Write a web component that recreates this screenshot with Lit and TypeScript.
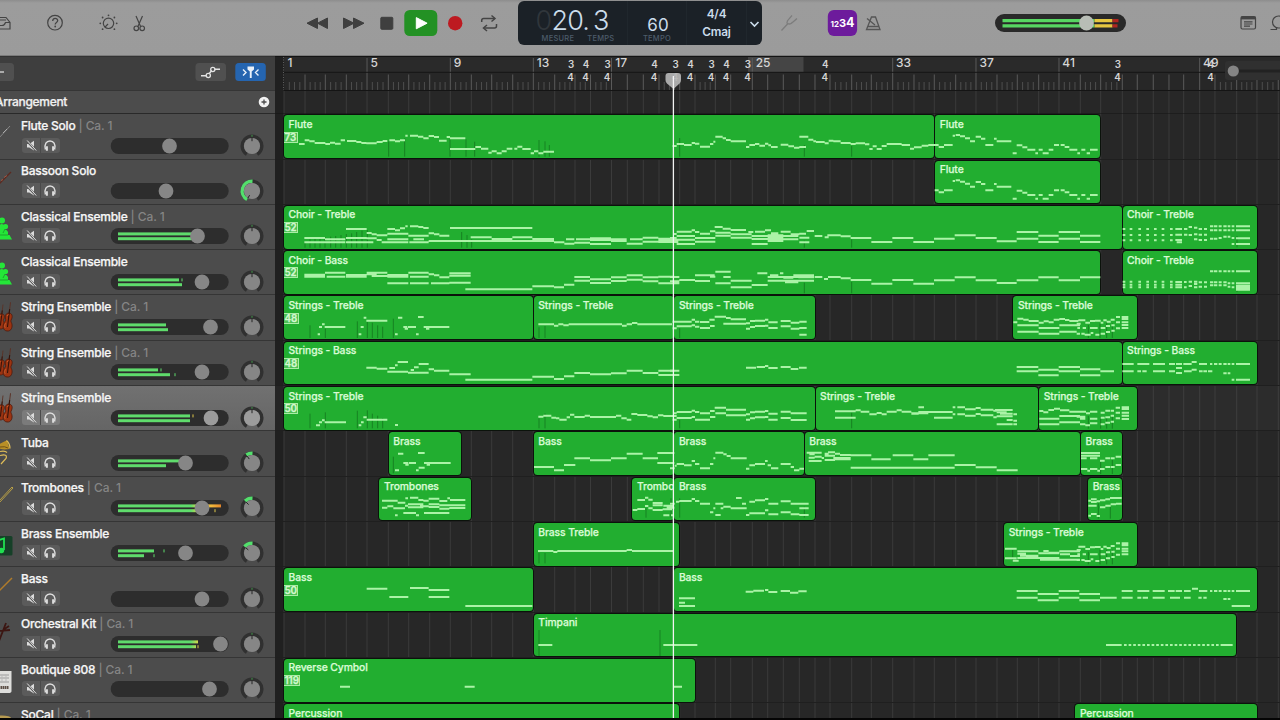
import { LitElement, html, css, svg, nothing } from "lit";
import { customElement, property } from "lit/decorators.js";
import { classMap } from "lit/directives/class-map.js";

interface Track {
  name: string;
  channel?: boolean;
  icon: string;
  volume: number;
  meters?: [number, number];
  peaks?: [number, number][];
  hot?: boolean;
  pan?: number;
  selected?: boolean;
}

interface Region {
  lane: number;
  from: number;
  to: number;
  label: string;
  badge?: string;
}

const TRACKS: Track[] = [
  { name: "Flute Solo", channel: true, icon: "flute", volume: 169.5, pan: 0 },
  { name: "Bassoon Solo", icon: "bassoon", volume: 166, pan: -150 },
  { name: "Classical Ensemble", channel: true, icon: "choir", volume: 197.5, meters: [195, 195] },
  { name: "Classical Ensemble", icon: "choir", volume: 202, meters: [179, 182], peaks: [[182, 0]] },
  { name: "String Ensemble", channel: true, icon: "strings", volume: 210.5, meters: [166, 168] },
  { name: "String Ensemble", channel: true, icon: "strings", volume: 202, meters: [158, 170], peaks: [[161, 0], [175, 1]] },
  { name: "String Ensemble", icon: "strings", volume: 211, meters: [190, 190], peaks: [[193, 0]], selected: true },
  { name: "Tuba", icon: "tuba", volume: 185.5, meters: [180, 166], pan: -35 },
  { name: "Trombones", channel: true, icon: "trombone", volume: 202, meters: [221, 200], peaks: [[215, 1]], hot: true, pan: -45 },
  { name: "Brass Ensemble", icon: "note", volume: 185.5, meters: [154, 144], peaks: [[164, 0], [154, 1]], pan: -50 },
  { name: "Bass", icon: "bow", volume: 202 },
  { name: "Orchestral Kit", channel: true, icon: "sticks", volume: 220.5, meters: [198, 196], peaks: [[198, 1]], hot: true },
  { name: "Boutique 808", channel: true, icon: "machine", volume: 209.5 },
  { name: "SoCal", channel: true, icon: "cymbal", volume: 202 },
];

const R = (lane: number, from: number, to: number, label: string, badge?: string): Region => ({ lane, from, to, label, badge });

const REGIONS: Region[] = [
  R(0, 284, 934.4, "Flute", "73"), R(0, 935.2, 1100.4, "Flute"),
  R(1, 935.2, 1100.4, "Flute"),
  R(2, 284, 1121.6, "Choir - Treble", "52"), R(2, 1122.6, 1256.6, "Choir - Treble"),
  R(3, 284, 1100.4, "Choir - Bass", "52"), R(3, 1122.6, 1256.6, "Choir - Treble"),
  R(4, 284, 533, "Strings - Treble", "48"), R(4, 533.8, 673.6, "Strings - Treble"), R(4, 674.4, 814.8, "Strings - Treble"), R(4, 1013.4, 1137.2, "Strings - Treble"),
  R(5, 284, 1121.6, "Strings - Bass", "48"), R(5, 1122.6, 1256.6, "Strings - Bass"),
  R(6, 284, 814.8, "Strings - Treble", "50"), R(6, 815.6, 1038.4, "Strings - Treble"), R(6, 1039.2, 1137.2, "Strings - Treble"),
  R(7, 388.8, 461, "Brass"), R(7, 533.8, 673.6, "Bass"), R(7, 674.4, 804, "Brass"), R(7, 804.8, 1080.2, "Brass"), R(7, 1081, 1121.6, "Brass"),
  R(8, 379.4, 471, "Trombones"), R(8, 632.4, 673.6, "Trombones"), R(8, 674.4, 814.8, "Brass"), R(8, 1088.2, 1121.6, "Brass"),
  R(9, 533.8, 679, "Brass Treble"), R(9, 1004.2, 1137.2, "Strings - Treble"),
  R(10, 284, 533, "Bass", "50"), R(10, 674.4, 1256.6, "Bass"),
  R(11, 533.8, 1236.2, "Timpani"),
  R(12, 284, 694.6, "Reverse Cymbol", "119"),
  R(13, 284, 679, "Percussion"), R(13, 1075.4, 1256.6, "Percussion"),
];

const BARS = [284, 305, 325.3, 346.3, 367, 388.3, 408.7, 429.7, 450.3, 471.3, 491.7, 512.7, 533.3, 554.7, 575, 590.5, 611.5, 627.3, 643.3, 659, 679.7, 695, 715.3, 730.7, 752.3, 767.7, 783.3, 799.3, 815, 830, 851.7, 871.3, 892.7, 914, 934.3, 955.7, 976, 997, 1017.3, 1038.7, 1059, 1080.3, 1100.7, 1122.3, 1137.3, 1153.3, 1169, 1183.7, 1199.7, 1215, 1236.7, 1257, 1278.3];
const NUMBERS: [number, string][] = [[284, "1"], [367, "5"], [450.3, "9"], [533.3, "13"], [611.8, "17"], [752.3, "25"], [892.7, "33"], [976, "37"], [1059, "41"], [1199.7, "49"]];
const SIGNATURES: [number, string][] = [[571, "3"], [586, "4"], [607.5, "3"], [654.5, "4"], [675.5, "3"], [690.5, "4"], [711.5, "3"], [726.5, "4"], [748, "3"], [825.3, "4"], [1118, "3"], [1211, "4"]];
const BEAT_SPANS: [number, number][] = [[284, 590], [591, 611], [660, 673], [696, 715], [732, 752], [830, 1122], [1215, 1280]];

// A phrase is a run of notes as "start end pitch" triples, three units to the
// pixel, measured from the phrase origin. Controller bars are "x top bottom".
interface Phrase { x: number; y: number; notes: string; bars?: string }

const FLUTE_SOLO = `848 855 77 857 870 75 870 885 79 885 900 85 900 915 94 917 933 80 933 946 86 946 970 105 972 980 86 980 1024 94
 1028 1040 130 1040 1057 106 1057 1072 112 1072 1096 119 1096 1104 130 1106 1118 119 1118 1136 130 1136 1150 119
 1152 1167 105 1172 1184 105 1184 1198 111 1198 1222 119 1222 1230 130 1234 1246 119 1250 1260 130 1260 1283 119`;

const STRINGS_END = `0 12 637 12 30 626 30 46 629 46 76 633 76 91 638 91 106 634 106 121 637 121 138 629 138 155 627 155 168 630 168 195 633
 195 216 631 216 230 638 230 245 633 245 262 632 262 270 638 270 280 631 280 292 635 292 304 629 308 320 621 325 345 621 325 345 627 325 345 637 325 345 645 325 345 654
 12 76 646 76 138 654 138 200 646 12 76 665 76 138 671 138 190 665 190 202 641 192 200 654 208 218 654 230 253 654 262 276 654 278 290 648 294 304 646 308 320 637
 190 200 671 204 214 671 214 232 674 232 240 669 246 258 674 262 275 671 278 290 666 294 304 662 308 320 655`;

const PHRASES: Phrase[] = [
  {
    x: 0, y: 0,
    notes: `57 74 102 74 88 91 88 104 94 104 136 99 136 150 102 150 165 98 165 182 101 182 195 91 201 229 93 229 244 96 244 259 99 259 290 100 290 308 96 308 322 93 328 345 91 345 360 94 360 375 91
 376 383 77 390 414 77 414 430 80 430 446 85 446 462 78 462 477 81 477 500 92 500 510 81 510 556 85 510 586 117 586 603 111 603 625 116 625 635 128 635 650 124 650 665 130 665 680 124 680 697 116 703 712 116 712 727 110 727 752 117 752 762 130 762 775 124 775 790 130 790 822 125
 198 260 357 73 135 384 73 196 397 135 196 388 198 260 384 198 280 397 260 275 369 275 290 373 290 322 376 260 290 385 290 305 390 305 385 397 322 345 357 345 360 361 360 375 355 376 383 349 390 415 349 415 430 351 430 446 354
 322 385 371 385 446 377 322 385 388 400 432 388 446 462 370 462 478 373 478 508 377 446 480 393 480 572 393 388 446 397 510 757 354 572 635 382 635 697 387 697 757 382 757 822 387 572 822 393 822 853 397 853 883 401 858 883 388
 888 930 388 883 930 398 930 993 385 930 993 390 930 993 402 993 1040 388 993 1040 393 1040 1088 401 1050 1088 388 1088 1135 383 1088 1135 395 1135 1183 386 1135 1183 391 1135 1183 396
 73 135 494 73 135 500 135 196 488 140 196 500 198 260 495 198 260 500 260 322 488 260 290 493 275 322 498 322 385 500 322 385 495 322 385 520 385 446 488 390 446 500 390 446 520 446 462 493 462 478 496 478 508 502 453 508 520 508 572 490 508 572 497 508 572 518
 556 757 538 757 822 529 822 852 532 852 883 524 883 930 501 883 930 512 930 993 508 930 993 519 993 1040 502 993 1040 513 1040 1088 496 1040 1088 509 1088 1135 502 1088 1135 514 1135 1183 500 1135 1183 520
 113 120 673 117 126 651 126 134 643 134 196 651 236 244 673 242 251 651 251 259 623 259 322 632 345 353 673 354 367 623 370 382 651 374 384 656 384 408 651 408 416 673 414 431 621 431 446 651 438 448 656 446 508 651
 775 822 643 822 835 647 835 850 643 850 866 646 866 1026 643 1026 1040 647 1040 1056 643 1056 1072 639 1072 1130 643 1130 1176 643`,
    bars: `326 94 140 374 85 140 510 88 140 558 88 140 584 95 140 777 90 140 795 94 140 808 105 140
 75 395 413 90 388 413 105 385 413 120 383 413 135 381 413 152 380 413 167 378 413 183 375 413 199 372 413 215 370 413 230 366 413 246 362 413 262 360 413 545 366 413 561 375 413 575 388 413
 90 646 684 136 656 684 232 634 684 262 636 684 277 638 684 293 646 684 308 650 684 340 626 684 777 652 684 795 648 684`,
  },
  {
    x: 0, y: 675,
    notes: `259 290 98 290 322 101 328 345 99 345 353 91 353 384 81 322 384 110 384 446 113 392 402 105 402 416 97 416 446 87 446 462 103 462 508 107 508 572 118 556 757 134 757 822 125 822 852 132 852 883 124 883 930 114 930 993 118 993 1040 115 1040 1088 107 1088 1135 114 1135 1183 107 1135 1183 120
 108 120 271 117 126 262 126 134 256 134 198 262 236 244 271 243 251 262 250 260 247 260 322 254 345 354 270 775 790 245 790 814 242 814 828 248 828 838 250 838 860 254 860 870 247 870 883 239 883 914 246 914 930 242 930 1008 246 1008 1024 242 1024 1040 250 1040 1054 254 1054 1072 237 1072 1102 240 1102 1118 244 1118 1134 247 1134 1150 241 1150 1183 243
 345 357 406 354 370 356 370 384 384 376 386 389 386 408 384 414 434 354 408 416 406 416 434 398 432 448 384 440 450 389 446 512 384
 762 822 396 822 852 406 852 886 390 883 930 370 930 993 376 993 1040 370 1040 1088 356 1088 1134 370 1132 1183 354 1132 1183 384
 306 353 497 353 376 503 376 384 490 390 415 488 415 430 495 430 446 497 446 478 491 478 502 498 502 510 490 510 556 495 306 322 518 322 340 514 340 375 520 375 384 512 384 430 508 384 430 517 420 446 514 446 478 508 446 478 516 478 508 511 478 508 521 508 556 511 508 556 519
 345 353 541 370 408 534 408 417 541 432 508 534
 1058 1072 525 1072 1095 522 1095 1105 513 1105 1118 520 1118 1148 525 1148 1176 523 1072 1095 495 1095 1105 488 1105 1118 494 1118 1148 504 1118 1148 511 1150 1168 541 1150 1180 512 1160 1183 518 1173 1180 541
 774 820 648 820 832 651 832 1040 648 1040 1056 645 1056 1130 648 1130 1180 648`,
    bars: `90 236 280 136 232 280 232 227 280 262 226 280 277 236 280 293 242 280 308 250 280 777 250 280 795 235 280 340 365 415 1098 520 548 1173 490 548 777 654 685 795 654 685`,
  },
  {
    x: 1170, y: 0,
    notes: `8 20 108 20 42 102 42 65 105 65 75 99 75 88 101 90 120 110 120 130 102 130 136 95 136 158 80 158 168 85 168 182 90 182 228 94 228 238 111 238 255 105 255 268 102 268 285 107 285 295 101 295 303 106 303 323 111 332 355 104 355 372 109 372 388 113 388 408 111 388 415 80 415 430 89 430 438 94 438 464 96 464 476 100 476 490 92 490 512 94 512 542 99 542 557 102 557 585 100 585 598 103 598 608 117 608 620 109 620 635 117 635 650 108 650 695 102 695 720 105 720 732 116 732 755 112 755 775 107 775 806 105 806 822 111 822 848 105 ${FLUTE_SOLO}
 0 20 384 0 25 390 0 25 396 12 20 372 20 65 365 65 75 361 75 88 366 90 120 371 120 136 364 134 158 351 158 182 356 182 228 360 20 75 378 75 136 384 20 75 389 75 136 395 20 75 402 136 182 368 136 182 377 182 245 373 182 245 383 235 250 366 255 285 365 285 303 361 303 325 370 332 362 365 362 388 373 388 408 371 410 432 363 245 300 378 245 340 387 245 293 402 293 340 376 293 340 381 293 340 393 340 385 378 340 385 388 388 418 383 388 418 397
 434 457 378 464 476 382 472 512 376 512 542 379 542 604 384 604 667 396 667 730 384 730 792 396 792 854 386 854 917 376 917 980 384 980 1040 394 1040 1105 366 1040 1105 386 1105 1166 377 1105 1166 396 1166 1230 366 1166 1230 386 1230 1291 377 1230 1291 396
 0 28 501 0 28 514 12 28 520 28 75 510 75 90 513 75 134 496 90 120 513 136 182 485 120 136 500 160 182 501 136 182 520 182 245 512 182 245 532 245 262 525 245 293 525 262 292 490 300 325 496 330 340 490 293 385 501 293 385 512 340 370 503 370 432 496 345 385 517 385 432 502 385 432 512 434 457 501 462 474 507 474 512 501 512 542 505 542 604 510 604 667 521 667 730 510 730 792 521 792 854 511 854 917 502 917 980 511 980 1040 519 1040 1105 511 1105 1166 502 1166 1230 511 1230 1291 502
 8 65 635 65 75 629 75 88 635 90 118 636 118 134 629 134 168 620 168 182 624 182 228 628 228 240 640 240 255 633 255 285 632 285 295 629 295 323 637 332 362 633 362 388 638 388 410 635 8 20 655 20 65 649 65 75 646 75 88 650 90 120 654 120 134 648 160 228 641 228 240 656 240 255 651 255 285 648 285 295 647 295 323 654 332 362 649 362 388 656 388 410 654 388 410 674`,
    bars: `29 84 140 403 105 140 545 108 140 403 392 413 545 388 413 403 518 550 545 516 550 29 655 684`,
  },
  { x: 1170, y: 136, notes: `794 806 105 806 822 111 822 848 105 ${FLUTE_SOLO}` },
  {
    x: 1170, y: 675,
    notes: `0 28 107 0 28 120 228 258 98 260 285 96 285 295 93 295 323 99 332 362 96 362 385 102 387 410 98 1040 1105 96 1040 1105 109 1105 1166 104 1105 1166 121 1166 1230 96 1166 1230 109 1230 1291 103 1230 1291 121 1291 1332 109
 0 20 243 8 20 254 12 20 235 20 65 231 65 75 227 75 88 231 90 120 235 120 134 228 134 168 218 168 228 224 228 240 238 240 255 232 255 285 230 285 295 228 295 323 236 332 362 230 362 410 235 20 65 249 65 75 246 75 120 254 120 136 246 136 168 235 168 228 241 228 240 254 240 255 250 255 285 247 285 295 246 295 323 254 332 362 249 362 410 255
 495 557 229 495 557 248 557 572 226 572 598 230 598 620 238 620 635 234 635 650 238 650 680 230 680 695 226 695 724 230 724 746 236 745 762 217 745 780 231 760 848 231 792 848 248 724 775 235 848 856 217 848 856 238 862 885 217 862 885 238 885 917 223 885 917 242 917 932 219 917 932 237 932 970 224 932 970 241 970 980 227 970 980 247 975 1028 225 980 1010 232 990 1028 236 980 1028 244 1010 1028 255 980 1028 268 1030 1041 238 1030 1041 257 1030 1041 268
 0 14 400 14 20 392 20 42 387 42 65 391 65 75 378 75 88 387 90 120 400 120 130 387 130 136 370 136 160 353 160 170 358 170 182 363 182 230 370 228 238 401 238 255 391 255 285 387 285 293 378 293 303 391 303 325 400 332 362 387 362 372 396 372 388 406 388 402 401
 410 455 353 418 434 358 416 434 368 416 455 378 434 455 365 455 462 369 464 476 356 474 495 352 464 495 362 464 495 375 495 510 356 495 542 373 490 542 369 510 542 360 542 604 361 604 662 373 668 730 361 730 775 373 775 854 361 542 854 398 854 917 390 917 980 397 980 1043 406
 0 14 506 18 28 500 28 65 498 65 75 492 75 88 498 90 120 506 120 130 532 130 136 520 136 160 506 136 152 540 160 182 515 152 160 520 182 230 520 198 215 489 216 228 506 228 238 540 238 255 500 255 285 496 285 295 492 295 325 506 238 285 535 285 295 526 295 325 538 332 362 499 332 362 532 362 388 506 362 388 538 388 416 506 388 416 520 388 416 540
 1005 1040 641 1005 1040 670 1028 1046 677`,
    bars: `29 255 280 545 233 280 29 490 548 403 515 548 1028 645 680`,
  },
  {
    x: 2100, y: 0,
    notes: `${[428, 449, 475, 499, 522, 545, 570].map((x) => `${x} ${x + 8} 357 ${x} ${x + 8} 375 ${x} ${x + 8} 391 ${x} ${x + 8} 515 ${x} ${x + 8} 524 ${x} ${x + 8} 532`).join(" ")}
 586 606 357 586 606 374 586 606 390 590 606 397 612 622 357 612 622 374 626 636 351 626 636 375 642 652 353 642 652 373 642 652 388 656 666 357 656 666 374 656 666 390 672 681 357 672 681 374 672 681 390
 690 700 349 702 712 349 716 725 349 730 740 349 743 751 349 755 763 349 768 810 349 690 700 361 702 712 361 716 725 361 730 740 361 743 751 361 755 763 361 768 810 361 690 700 386 702 712 386 716 725 384 730 740 380 743 751 380 755 763 384 768 810 385 768 810 402 755 763 402
 586 606 516 586 606 524 586 606 532 612 620 516 612 620 532 626 636 515 626 636 528 642 652 515 642 652 522 642 652 532 656 666 517 656 666 530 672 681 517 672 681 530
 690 700 484 702 712 484 716 725 484 730 740 484 743 751 484 755 763 484 768 810 484 690 700 517 702 712 517 716 725 517 730 740 517 743 751 520 755 763 520 768 810 520 690 700 526 702 712 526 716 725 526 730 740 526 743 751 530 755 763 532 768 810 527 768 810 533 768 810 539
 427 461 762 472 508 762 519 555 762 567 585 762 588 606 762 610 635 762 635 650 756 657 681 762 690 697 762 702 712 762 716 725 762 730 740 762 743 751 762 755 763 762 768 810 762 427 461 784 472 483 784 487 500 784 519 555 784 567 585 784 588 606 774 588 606 789 612 635 784 635 650 779 657 668 784 670 681 784 684 697 784 730 740 790 743 751 790 755 763 809 768 810 809`,
    bars: `771 378 412 771 520 546`,
  },
  { x: 2200, y: 0, notes: STRINGS_END, bars: `225 645 684 260 640 684 280 636 684 297 640 684` },
  {
    x: 2100, y: 0,
    notes: `178 190 903 190 205 907 205 222 900 222 240 896 240 268 901 268 300 905 178 238 926 238 300 918 178 238 943 238 300 937 300 318 905 318 330 910 330 352 905 362 374 908 376 390 902 392 402 902 407 420 893 407 420 908 407 420 925 425 447 892 425 447 897 425 447 908 425 447 917 425 447 927 290 316 920 300 316 926 330 352 926 362 374 923 376 390 922 392 402 917 300 316 943 316 330 946 330 352 940 362 374 943 376 390 938 392 402 935
 303 360 1029 303 360 1037 303 320 1045 330 352 1045 360 374 1052 376 390 1045 392 404 1045 407 423 1040 303 322 1077 322 330 1082 330 352 1077 352 360 1082 360 374 1077 376 390 1071 392 404 1071 407 423 1065
 325 333 1172 333 350 1168 333 350 1176 350 360 1174 325 350 1187 360 376 1192 376 392 1187 392 408 1183 408 425 1181 360 376 1171 376 390 1168 390 425 1164 325 333 1217 333 350 1212 350 360 1218
 112 175 1324 112 138 1331 138 175 1338 175 238 1330 190 206 1323 206 238 1328 238 300 1324 240 270 1333 270 300 1338 112 238 1344 180 300 1349 120 175 1337`,
    bars: `325 918 956 362 920 956 380 918 956 397 918 956 362 1056 1092 397 1050 1092 355 1180 1226 391 1190 1226`,
  },
  { x: 2200, y: 679, notes: STRINGS_END.trim().split(/\s+/).reduce((a: string[], v, i, s) => (i % 3 === 0 && +v >= 190 && a.push(s[i], s[i + 1], s[i + 2]), a), []).join(" "), bars: `225 646 684 260 640 684 280 640 684 297 640 684` },
  {
    x: 0, y: 0,
    notes: `260 322 1436 328 385 1461 390 446 1434 446 508 1440 446 508 1461 556 757 1488
 1197 1245 1465 1197 1215 1478 1197 1245 1488 1397 1420 1445 1420 1452 1442 1455 1465 1440 1465 1492 1446 1502 1530 1443 1530 1555 1448 1555 1580 1444
 2210 2273 1443 2210 2273 1463 2273 2336 1452 2273 2336 1471 2336 2398 1443 2336 2398 1463 2398 2460 1452 2398 2460 1471 2460 2510 1463
 2525 2558 1443 2572 2608 1443 2618 2654 1443 2664 2684 1443 2687 2706 1443 2712 2732 1443 2736 2754 1436 2757 2782 1443 2790 2797 1443 2802 2812 1443 2816 2825 1443 2830 2840 1443 2843 2851 1443 2855 2863 1443 2868 2910 1443
 2525 2558 1463 2572 2584 1463 2588 2604 1463 2618 2654 1463 2670 2700 1463 2712 2732 1463 2755 2765 1463 2770 2780 1463 2830 2840 1467 2843 2851 1467 2855 2910 1488
 775 817 1605 1150 1252 1605 2478 2525 1605 ${Array.from({ length: 24 }, (_, i) => `${2532 + i * 13.8} ${2540 + i * 13.8} 1605`).join(" ")} 2826 2858 1605
 180 210 1730 554 584 1730 1180 1206 1730`,
    bars: `777 1560 1638 1140 1560 1638`,
  },
];

function notePath(list: string): string {
  const n = list.trim().split(/\s+/).map(Number);
  let d = "";
  for (let i = 0; i + 2 < n.length; i += 3) d += `M${n[i]} ${n[i + 2]}H${n[i + 1]}`;
  return d;
}

function barPath(list: string): string {
  const n = list.trim().split(/\s+/).map(Number);
  let d = "";
  for (let i = 0; i + 2 < n.length; i += 3) d += `M${n[i]} ${n[i + 1]}V${n[i + 2]}`;
  return d;
}

const cello = (x: number, y: number, s: number) => svg`
  <g transform="translate(${x} ${y}) rotate(7) scale(${s})">
    <path d="M0 -18V-29" stroke="#5a3226" stroke-width="1"/>
    <path d="M0 -18C-3.500 -18-4 -14.500-2.800 -11.500C-2.300 -10.300-3 -9.500-3.800 -8C-5.200 -5-4.500 0 0 0S5.200 -5 3.800 -8C3 -9.500 2.300 -10.300 2.800 -11.500C4 -14.500 3.500 -18 0 -18z" fill="#9c3412" stroke="#501a0c" stroke-width=".8"/>
    <path d="M0 -22V-4" stroke="#32120a" stroke-width="1.100"/>
    <path d="M-2.200 -3c-1 -1-1 -3 0 -4.500M-1.500 -15q.5 -1.500 1 -1.500" stroke="#cf602c" stroke-width=".9" fill="none"/>
  </g>`;

const INSTRUMENTS: Record<string, unknown> = {
  flute: svg`<path d="M-1 24L10 12" stroke="#858585" stroke-width="1"/><path d="M3 19l4-4" stroke="#c4c4c4" stroke-width=".7"/>`,
  bassoon: svg`<path d="M-1 24L11 12" stroke="#5b2a20" stroke-width="1.500"/><path d="M4 17.500l3-2M1 20.500l2-1" stroke="#a55b48" stroke-width=".9"/>`,
  choir: svg`<g fill="#24e638"><circle cx="2" cy="15.500" r="3"/><path d="M-2 32V21q4-4 7 0v11z"/><circle cx="5.500" cy="21.500" r="2.600"/><path d="M2 31v-4q3.500-5 6 0v4zM0 30h9.500l2.500 4.500H0z"/></g><path d="M5 24l-2 4M-1 30h9" stroke="#167c22" stroke-width=".6"/>`,
  strings: svg`${cello(0, 34, 0.85)}${cello(7, 36, 1)}`,
  tuba: svg`<path d="M-1 13c3-1 6-3 8-3.500l2.500 8c-2 1-6 1.500-10 0z" fill="#b98f26"/><path d="M6.500 9.500q3.500 3 3.500 8M0 24.500q8-2 6 3l-5 5.500M0 20.500q5-1 7 1" stroke="#e0bd58" stroke-width="1.200" fill="none"/><path d="M0 16q5-1 8 1" stroke="#6e5014" fill="none"/>`,
  trombone: svg`<path d="M-1 24L12 10l1 1L-1 26" fill="none" stroke="#c4a846" stroke-width=".9"/>`,
  note: svg`<rect x="-2" y="14" width="14.500" height="19.500" rx="1.500" fill="#164028"/><path d="M-1 18l5-1.500V28" stroke="#20df50" stroke-width="1.800" fill="none"/><circle cx="1.500" cy="28.500" r="2.700" fill="#20df50"/>`,
  bow: svg`<path d="M-1 24L12 11" stroke="#b17c2a" stroke-width="1.400"/>`,
  sticks: svg`<path d="M-1 18l11-1M6 10L-1 28M3 17l6-4" stroke="#3c1612" stroke-width="1.800"/>`,
  machine: svg`<path d="M-1 13h12.500v20q0 2-3 2h-9.500z" fill="#dededc"/><path d="M-1 17h10M-1 20h10M-1 24h10" stroke="#9a9a9a"/><path d="M2 16v9M6 16v9" stroke="#b9b9b9"/><path d="M-1 29.500h10" stroke="#5d5048" stroke-width="3" stroke-dasharray="1.500 .5"/>`,
  cymbal: svg`<ellipse cx="2" cy="15" rx="9" ry="2.500" fill="#b69a51"/>`,
};

@customElement("track-header")
export class TrackHeader extends LitElement {
  @property({ attribute: false }) track!: Track;

  static styles = css`
    :host { display: block; height: 45.3px; flex: none; }
    .row { box-sizing: border-box; height: 100%; position: relative; display: grid; grid-template-columns: 21px 89px 118px 1fr; grid-template-rows: 23.500px 16px; border-bottom: 1px solid #353535; background: #4c4c4c; }
    .selected { background: linear-gradient(#717171, #656565); }
    .icon { grid-row: 1 / 3; width: 21px; height: 44px; display: block; }
    .name { grid-column: 2 / 5; align-self: center; font: 500 12px/16px Inter, sans-serif; letter-spacing: -0.240px; color: #f6f6f6; -webkit-text-stroke: 0.250px #f6f6f6; white-space: nowrap; }
    .channel { color: #858585; letter-spacing: -0.100px; -webkit-text-stroke: 0; }
    .buttons { display: flex; margin-left: 1px; width: 38px; height: 15px; border-radius: 3px; background: #5b5b5b; overflow: hidden; }
    .button { width: 18px; height: 15px; }
    .button + .button { border-left: 1px solid #4a4a4a; }
    .selected .buttons { background: #7b7b7b; }
    .slider { width: 120px; height: 16px; display: block; overflow: visible; }
    .pan { width: 26px; height: 26px; margin: -5px 0 0 11px; display: block; }
  `;

  render() {
    const t = this.track;
    const pan = t.pan ?? 0;
    const knob = t.selected ? "#9c9c9c" : "#868686";
    const point = (deg: number, r: number) => {
      const a = ((deg - 90) * Math.PI) / 180;
      return `${(13 + r * Math.cos(a)).toFixed(2)} ${(13 + r * Math.sin(a)).toFixed(2)}`;
    };
    return html`
      <div class=${classMap({ row: true, selected: !!t.selected })}>
        <svg class="icon" viewBox="0 0 21 44">${INSTRUMENTS[t.icon]}</svg>
        <div class="name">${t.name}${t.channel ? html`<span class="channel"> | Ca. 1</span>` : nothing}</div>
        <div class="buttons">
          <svg class="button" viewBox="0 0 18 15"><path d="M5 6h2.300L12 2.800v9.600L7.300 9.500H5z" fill="#dcdcdc"/><path d="M4.500 2.500l10 10.500" stroke=${t.selected ? "#7b7b7b" : "#5b5b5b"} stroke-width="2.200"/><path d="M5.200 2.500l9 10" stroke="#dcdcdc" stroke-width="1"/></svg>
          <svg class="button" viewBox="0 0 18 15"><path d="M4.400 11.500C3 6 5.500 3 9 3s6 3 4.600 8.500" fill="none" stroke="#dcdcdc" stroke-width="1.400"/><path d="M5.900 8.300v4.400M12.100 8.300v4.400" stroke="#dcdcdc" stroke-width="2"/></svg>
        </div>
        <svg class="slider" viewBox="110 0 120 16">
          <defs><linearGradient id="level" gradientUnits="userSpaceOnUse" x1="118" x2="222" y1="0" y2="0"><stop offset=".7" stop-color="#5fdc6c"/><stop offset=".77" stop-color="#d6d84a"/><stop offset=".9" stop-color="#f0b83c"/><stop offset="1" stop-color="#e58128"/></linearGradient></defs>
          <rect x="110.700" y="0" width="118" height="16" rx="8" fill="#2d2d2d"/>
          ${t.meters ? t.meters.map((m, i) => svg`<rect x="118" y=${4.400 + i * 4.800} width=${m - 118} height="3" fill=${t.hot ? "url(#level)" : "#5fdc6c"}/>`) : nothing}
          ${t.peaks ? t.peaks.map(([x, row]) => svg`<rect x=${x - 0.500} y=${4.400 + row * 4.800} width="1" height="3" fill=${t.hot || t.selected ? "#e0c84a" : "#5fdc6c"}/>`) : nothing}
          <circle cx=${t.volume} cy="8" r="7.400" fill=${knob}/>
        </svg>
        <svg class="pan" viewBox="0 0 26 26">
          <path d="M${point(-148, 9.800)}A9.800 9.800 0 1 1 ${point(148, 9.800)}" fill="none" stroke="#303030" stroke-width="3.400"/>
          ${pan ? svg`<path d="M${point(pan, 9.800)}A9.800 9.800 0 0 1 ${point(3, 9.800)}" fill="none" stroke="#53df6c" stroke-width="3.400"/>` : svg`<path d="M13 1.800v2" stroke="#409648" stroke-width="1"/>`}
          <circle cx="13" cy="13" r="8.100" fill=${knob}/>
          <path d="M${point(pan, 8.300)}L${point(pan, 4.800)}" stroke="#222" stroke-width="1"/>
        </svg>
      </div>`;
  }
}

@customElement("transport-bar")
export class TransportBar extends LitElement {
  static styles = css`
    :host { display: block; flex: none; height: 56px; }
    .bar { height: 55px; display: grid; grid-template-columns: 518px 244px 1fr; border-bottom: 1px solid #7b7b7b; background: linear-gradient(#8d8d8d, #9c9c9c 3px, #9b9b9b); }
    .side { display: block; height: 55px; width: 100%; }
    .lcd { margin-top: 1px; height: 44px; border-radius: 6px; background: #1b2127; display: grid; grid-template-columns: 110px 59px 60px 15px; color: #cbdceb; font-family: Inter, sans-serif; }
    .cell { display: flex; flex-direction: column; align-items: center; border-right: 1px solid #20272d; box-sizing: border-box; }
    .cell:last-child { border: 0; }
    .digits { display: grid; grid-template-columns: 16px 41.500px 20px; font-weight: 300; font-size: 27px; line-height: 20px; padding: 10px 0 3px 18px; width: 110px; box-sizing: border-box; }
    .ghost { color: #30363b; }
    .whole { letter-spacing: -0.900px; }
    .captions { display: flex; gap: 13px; padding-left: 11px; }
    .caption { font-size: 7.500px; line-height: 9px; letter-spacing: 0.250px; font-weight: 500; color: #4d5c6a; }
    .tempo { font-size: 17px; line-height: 18px; padding: 14.500px 0 0.500px 2px; }
    .key { font-size: 11.800px; line-height: 18.500px; font-weight: 600; letter-spacing: -0.200px; }
    .keys { padding-top: 3.500px; }
    .chevron { width: 15px; height: 44px; overflow: visible; }
    .count { font-family: Inter, sans-serif; font-weight: 700; fill: #fff; }
  `;

  render() {
    return html`
      <div class="bar">
        <svg class="side" viewBox="0 0 518 55">
          <g fill="none" stroke="#444" stroke-width="1.200">
            <path d="M-2 17.500h8l4 5v6.500H-2M10 22.500H5.500q-1 3-3.500 3H-1M0 20h6"/>
            <circle cx="55" cy="22.700" r="7.300"/>
            <path d="M52.700 21c0-3.400 5-3.400 5-.4c0 2-2.500 1.800-2.500 3.800" stroke-width="1.300"/>
            <circle cx="108.500" cy="23.300" r="5.200"/><path d="M108 24l-3 3.200"/>
            <path d="M136 16l4.800 11M142.500 16l-4.800 11"/><circle cx="136.300" cy="28.300" r="2.300"/><circle cx="142.200" cy="28.300" r="2.300"/>
          </g>
          <circle cx="55.200" cy="26.500" r=".9" fill="#444"/>
          <g fill="#444"><circle cx="108.500" cy="15.300" r=".9"/><circle cx="102.600" cy="17.500" r=".9"/><circle cx="114.400" cy="17.500" r=".9"/><circle cx="100.300" cy="23.300" r=".9"/><circle cx="116.700" cy="23.300" r=".9"/><circle cx="102.600" cy="29.200" r=".9"/><circle cx="114.400" cy="29.200" r=".9"/></g>
          <g fill="#3f3f3f" stroke="#3f3f3f" stroke-width="1" stroke-linejoin="round">
            <path d="M317.500 18v10.500L307 23.200zM327.500 18v10.500L317.500 23.200zM343.500 18v10.500L354 23.200zM353.500 18v10.500L364 23.200z"/>
            <rect x="380.800" y="17.300" width="12" height="12" rx="1"/>
          </g>
          <rect x="404.300" y="10" width="33" height="26" rx="5.500" fill="#239124"/>
          <path d="M416.300 17.600v11.200l10.800-5.600z" fill="#fff" stroke="#fff" stroke-linejoin="round"/>
          <circle cx="455.200" cy="23.200" r="7.200" fill="#bd1a21"/>
          <g fill="none" stroke="#444" stroke-width="1.500"><path d="M481.700 22v-1.500q0-2 2-2H495M496.500 24v2q0 2-2 2H484"/><path d="M491.500 15.500l3.500 3-3.500 3M487 25l-3.500 3 3.500 3"/></g>
        </svg>
        <div class="lcd">
          <div class="cell">
            <div class="digits"><span class="ghost">0</span><span class="whole">20.</span><span>3</span></div>
            <div class="captions"><span class="caption">MESURE</span><span class="caption">TEMPS</span></div>
          </div>
          <div class="cell"><span class="tempo">60</span><span class="caption">TEMPO</span></div>
          <div class="cell keys"><span class="key">4/4</span><span class="key">Cmaj</span></div>
          <svg class="chevron" viewBox="0 0 15 44"><path d="M3.500 21l4 4 4-4" fill="none" stroke="#cbdceb" stroke-width="1.600"/></svg>
        </div>
        <svg class="side" viewBox="762 0 518 55">
          <g fill="none" stroke="#7c7c7c" stroke-width="1.300"><path d="M781.500 30.500l6.500-7M787.500 24c-1.500-2 0-3.500 4.500-8.500M788 23.500c2 1.500 3.500 0 9-5"/></g>
          <rect x="827.800" y="10" width="29.300" height="26" rx="6" fill="#6d1b9c"/>
          <text class="count" x="830.500" y="26.500" font-size="8">12</text><text class="count" x="839" y="27" font-size="11">3</text><text class="count" x="846" y="27.200" font-size="12.500">4</text>
          <g fill="none" stroke="#555" stroke-width="1.300"><path d="M871.500 17h4l4.500 12.500h-13.500zM868 26.500h11M875 25l-8-6.500"/></g>
          <rect x="995" y="14" width="131" height="18" rx="9" fill="#292929"/>
          <g><path d="M1002.500 20.600h92M1002.500 25.800h92" stroke="#57d662" stroke-width="3.300"/><path d="M1094.500 20.600h18M1094.500 25.800h18" stroke="#e6c640" stroke-width="3.300"/><path d="M1112.500 20.600h6M1112.500 25.800h5" stroke="#ae2521" stroke-width="3.300"/></g>
          <circle cx="1086.500" cy="23" r="7.400" fill="#b8bdb6"/>
          <g fill="none" stroke="#444" stroke-width="1.200"><rect x="1241" y="16.500" width="14.500" height="12.500" rx="1.500"/><path d="M1241 18h14.500" stroke-width="2.800"/><path d="M1244 21.800h8.500M1244 24h8.500M1244 26.200h6"/><circle cx="1278.500" cy="22" r="6"/><path d="M1270.500 29.500h6v-2"/></g>
        </svg>
      </div>`;
  }
}

@customElement("time-ruler")
export class TimeRuler extends LitElement {
  static styles = css`
    :host { display: block; flex: none; height: 58.300px; }
    .ruler { display: block; width: 1005px; height: 58.300px; }
    .number { font: 500 12px Inter, sans-serif; fill: #d5d5d5; }
    .signature { font: 600 9.800px Inter, sans-serif; fill: #d5d5d5; text-anchor: middle; }
  `;

  render() {
    const labelled = new Set(NUMBERS.map(([x]) => Math.round(x)));
    const beats: number[] = [];
    for (let i = 0; i < BARS.length; i++) {
      const from = BARS[i];
      const to = BARS[i + 1] ?? from + 21;
      if (!BEAT_SPANS.some(([a, b]) => from >= a - 1 && from < b - 3)) continue;
      const count = Math.round((to - from) / 5.200);
      for (let k = 1; k < count; k++) beats.push(from + ((to - from) * k) / count);
    }
    return svg`
      <svg class="ruler" viewBox="275 56 1005 58.300">
        <rect x="275" y="56" width="1005" height="58.300" fill="#272727"/>
        <rect x="275" y="56" width="9" height="58.300" fill="#202020"/>
        <rect x="284" y="56" width="996" height="16" fill="#2a2a2a"/>
        <rect x="748" y="57" width="55.500" height="15" fill="#454545"/>
        <path d="M283.500 57V90" stroke="#606060" stroke-dasharray="1 1.500"/>
        <path d=${beats.map((x) => `M${x.toFixed(1)} 82V90`).join("")} stroke="#525252" stroke-width=".9"/>
        <path d=${BARS.slice(1).map((x) => `M${x} ${labelled.has(Math.round(x)) ? 58 : 74.500}V90`).join("")} stroke="#5a5a5a" stroke-width="1"/>
        <path d=${BARS.map((x) => `M${x} 91V114`).join("")} stroke="#3b3b3b" stroke-width="1"/>
        <path d="M275 56.500H1280M284 72.300H1280M284 90.500H1280M275 114H1280" stroke="#151515" stroke-width="1"/>
        ${NUMBERS.map(([x, n]) => svg`<text class="number" x=${x + 3.400} y="66.700">${n}</text>`)}
        ${SIGNATURES.map(([x, n]) => svg`<text class="signature" x=${x} y="68.300">${n}</text><text class="signature" x=${x - 0.500} y="80.700">4</text>`)}
        <rect x="1225" y="61" width="60" height="19" rx="3" fill="#303030"/>
        <path d="M1236 71H1280" stroke="#222" stroke-width="3"/>
        <circle cx="1233.300" cy="71" r="5.600" fill="#858585"/>
      </svg>`;
  }
}

@customElement("arrange-canvas")
export class ArrangeCanvas extends LitElement {
  static styles = css`
    :host { display: block; flex: 1; position: relative; overflow: hidden; background: #272727; }
    .grid { position: absolute; left: 0; top: 0; width: 1005px; height: 606px; }
    .lanes { display: flex; flex-direction: column; }
    .lane { position: relative; flex: none; box-sizing: border-box; height: 45.300px; border-bottom: 1px solid #1f1f1f; }
    .selected { background: #ffffff06; }
    .region { position: absolute; top: 1px; height: 42.700px; box-sizing: border-box; border-radius: 3.500px; background: #22ae30; box-shadow: 0 0 0 1px #0b120b; overflow: hidden; padding: 1.600px 0 0 4.500px; font: 500 10.300px/14px Inter, sans-serif; letter-spacing: -0.080px; -webkit-text-stroke: 0.250px #d9fbd5; color: #d9fbd5; white-space: nowrap; }
    .badge { display: block; width: max-content; margin: 0.700px 0 0 -4.500px; padding: 0 0.500px; border: 1px solid #a9eca5; border-left: 0; background: #4dbf55; font-weight: 600; font-size: 9.800px; line-height: 9px; color: #d2f8ce; }
    .notes { position: absolute; left: 5px; top: -4.300px; width: 1000px; height: 610px; }
  `;

  render() {
    return html`
      <svg class="grid" viewBox="275 114 1005 606">
        <rect x="275" y="114" width="9" height="606" fill="#202020"/>
        <path d=${BARS.map((x) => `M${x} 114V720`).join("")} stroke="#3b3b3b" stroke-width="1"/>
      </svg>
      <div class="lanes">
        ${TRACKS.map((t, lane) => html`
          <div class=${classMap({ lane: true, selected: !!t.selected })}>
            ${REGIONS.filter((r) => r.lane === lane).map((r) => html`
              <div class="region" style="left:${r.from - 275}px;width:${r.to - r.from}px">
                ${r.label}${r.badge ? html`<span class="badge">${r.badge}</span>` : nothing}
              </div>`)}
          </div>`)}
      </div>
      <svg class="notes" viewBox="0 0 3000 1830">
        ${PHRASES.map((p) => svg`
          <g transform="translate(${p.x} ${p.y})" fill="none">
            <path d=${barPath(p.bars ?? "")} stroke="#178222" stroke-width="3"/>
            <path d=${notePath(p.notes)} stroke="#abf3a7" stroke-width="5.900"/>
          </g>`)}
      </svg>`;
  }
}

@customElement("app-root")
export class AppRoot extends LitElement {
  static styles = css`
    :host { display: block; width: 1280px; height: 720px; overflow: hidden; position: relative; background: #272727; font-family: Inter, sans-serif; }
    .window { height: 720px; display: flex; flex-direction: column; }
    .body { flex: 1; min-height: 0; display: flex; }
    .sidebar { width: 275px; flex: none; display: flex; flex-direction: column; overflow: hidden; }
    .tools { box-sizing: border-box; height: 35px; flex: none; background: #3e3e3e; border-top: 1px solid #333; border-bottom: 1px solid #353535; }
    .toolicons { display: block; width: 275px; height: 34px; }
    .arrangement { box-sizing: border-box; height: 23.300px; flex: none; display: flex; align-items: center; justify-content: space-between; padding: 0 5px 0 0; border-bottom: 1.500px solid #292929; background: #4c4c4c; color: #f1f1f1; font: 500 12px/16px Inter, sans-serif; }
    .title { margin-left: -5px; letter-spacing: -0.300px; -webkit-text-stroke: 0.250px #f1f1f1; }
    .add { width: 12px; height: 12px; }
    .content { flex: 1; min-width: 0; display: flex; flex-direction: column; }
    .playhead { position: absolute; left: 664px; top: 71px; width: 20px; height: 649px; }
    .edge { position: absolute; left: 0; right: 0; bottom: 0; height: 2px; background: #050505; }
  `;

  render() {
    return html`
      <div class="window">
        <transport-bar></transport-bar>
        <div class="body">
          <div class="sidebar">
            <div class="tools">
              <svg class="toolicons" viewBox="0 57 275 34">
                <rect x="-5" y="63" width="19" height="18" rx="3.500" fill="#505050"/><path d="M0 72h4" stroke="#ddd" stroke-width="1.300"/>
                <rect x="195.500" y="63" width="30.500" height="18" rx="3.500" fill="#505050"/>
                <path d="M201 75.700h5M209.300 73.500l2.500-3M214.500 69.300h5.500" stroke="#e2e2e2" stroke-width="1.500"/><circle cx="208.300" cy="75.500" r="2.100" fill="none" stroke="#e2e2e2" stroke-width="1.300"/><circle cx="212.800" cy="69.500" r="2.100" fill="none" stroke="#e2e2e2" stroke-width="1.300"/>
                <rect x="235.300" y="63" width="30.500" height="18" rx="3.500" fill="#2565b0"/>
                <path d="M243 69.500l3 3-3 3M258.500 69.500l-3 3 3 3" fill="none" stroke="#e9f1fa" stroke-width="1.400"/><path d="M247.500 66.500h6.500v3l-2.300 2v6.500h-1.900v-6.500l-2.300-2z" fill="#e9f1fa"/>
              </svg>
            </div>
            <div class="arrangement">
              <span class="title">Arrangement</span>
              <svg class="add" viewBox="0 0 12 12"><circle cx="6" cy="6" r="5.300" fill="#f2f2f2"/><path d="M6 3.500v5M3.500 6h5" stroke="#4c4c4c" stroke-width="1.300"/></svg>
            </div>
            ${TRACKS.map((t) => html`<track-header .track=${t}></track-header>`)}
          </div>
          <div class="content">
            <time-ruler></time-ruler>
            <arrange-canvas></arrange-canvas>
          </div>
        </div>
      </div>
      <svg class="playhead" viewBox="664 71 20 649">
        <path d="M665.500 76q0-3 3-3h9.500q3 0 3 3v4q0 2-1.500 3.500L673.500 89l-6.500-5.500q-1.500-1.500-1.500-3.500z" fill="#b5b5b5" opacity=".92"/>
        <path d="M673.400 76V720" stroke="#f3f3f3" stroke-width="1.300"/>
      </svg>
      <div class="edge"></div>`;
  }
}
